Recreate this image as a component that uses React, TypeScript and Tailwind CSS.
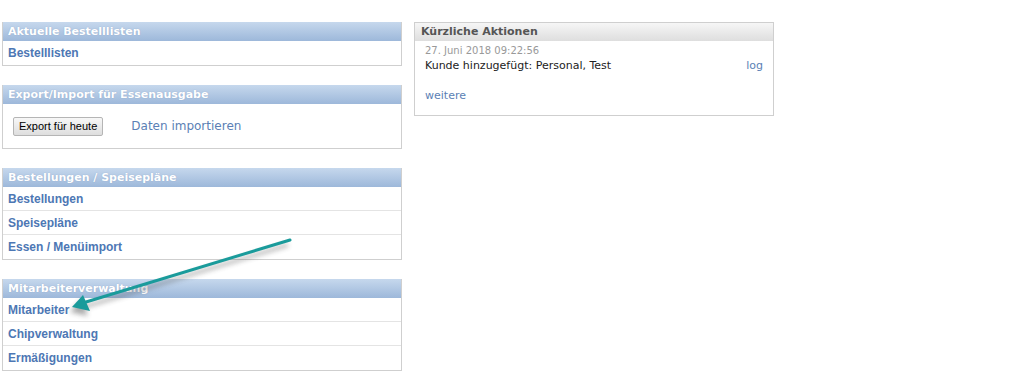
import React from "react";

const HEAD = "h-[19px] leading-[19px] pl-[5px] text-[11px] font-bold text-white bg-gradient-to-b from-[#c6d8ed] to-[#9db8da] [text-shadow:0_0_1px_rgba(60,90,140,0.35)] font-['DejaVu_Sans',sans-serif]";
const ROW = "h-[24px] leading-[24px] pl-[5px] border-b border-[#e4e4e4] last:border-b-0 text-[12px] font-bold text-[#4d77b4] font-['Liberation_Sans',Arial,sans-serif]";

function LinkBox({ title, links }: { title: string; links: string[] }) {
  return (
    <div className="border border-[#cfcfcf] border-t-0 bg-white">
      <div className={HEAD}>{title}</div>
      <div>
        {links.map(l => (
          <div key={l} className={ROW}>{l}</div>
        ))}
      </div>
    </div>
  );
}

export default function App() {
  return (
    <div className="relative w-[1015px] h-[390px] bg-white">
      <div className="flex gap-[12px] pt-[22px] pl-[2px]">
        {/* left column */}
        <div className="w-[400px] flex flex-col gap-[19px]">
          <LinkBox title="Aktuelle Bestelllisten" links={["Bestelllisten"]} />

          <div className="border border-[#cfcfcf] border-t-0 bg-white">
            <div className={HEAD}>Export/Import für Essenausgabe</div>
            <div className="h-[44px] flex items-center pl-[10px] gap-[28px]">
              <button className="h-[19px] px-[5px] border border-[#b5b5b5] rounded-[2px] bg-gradient-to-b from-[#f7f7f7] to-[#dedede] text-[11px] text-black font-['Liberation_Sans',Arial,sans-serif] leading-none">
                Export für heute
              </button>
              <span className="text-[12px] text-[#5b7fb5] font-['DejaVu_Sans',sans-serif]">Daten importieren</span>
            </div>
          </div>

          <LinkBox title="Bestellungen / Speisepläne" links={["Bestellungen", "Speisepläne", "Essen / Menüimport"]} />
          <LinkBox title="Mitarbeiterverwaltung" links={["Mitarbeiter", "Chipverwaltung", "Ermäßigungen"]} />
        </div>

        {/* right column */}
        <div className="w-[360px] self-start border border-[#cfcfcf] bg-white">
          <div className="h-[18px] leading-[18px] pl-[6px] text-[11px] font-bold text-[#555] bg-gradient-to-b from-[#f6f6f6] to-[#dedede] font-['DejaVu_Sans',sans-serif]">
            Kürzliche Aktionen
          </div>
          <div className="px-[10px] pt-[3px] pb-[12px] font-['DejaVu_Sans',sans-serif]">
            <div className="text-[10px] leading-[14px] text-[#999]">27. Juni 2018 09:22:56</div>
            <div className="flex justify-between text-[11px] leading-[15px] text-[#222]">
              <span>Kunde hinzugefügt: Personal, Test</span>
              <span className="text-[#5b7fb5]">log</span>
            </div>
            <div className="mt-[15px] text-[11px] leading-[15px] text-[#5b7fb5]">weitere</div>
          </div>
        </div>
      </div>

      {/* annotation arrow */}
      <svg className="absolute left-0 top-0 pointer-events-none" width="1015" height="390">
        <defs>
          <filter id="sh" x="-20%" y="-20%" width="140%" height="140%">
            <feGaussianBlur stdDeviation="2.5" />
          </filter>
        </defs>
        <g transform="translate(-2,5)" opacity="0.45" filter="url(#sh)">
          <line x1="290" y1="240" x2="86" y2="302" stroke="#444" strokeWidth="3" />
          <polygon points="72,307 83,295 90,311" fill="#444" />
        </g>
        <line x1="290" y1="240" x2="86" y2="302" stroke="#1a9b9b" strokeWidth="3" strokeLinecap="round" />
        <polygon points="72,307 83,295 90,311" fill="#1a9b9b" />
      </svg>
    </div>
  );
}
